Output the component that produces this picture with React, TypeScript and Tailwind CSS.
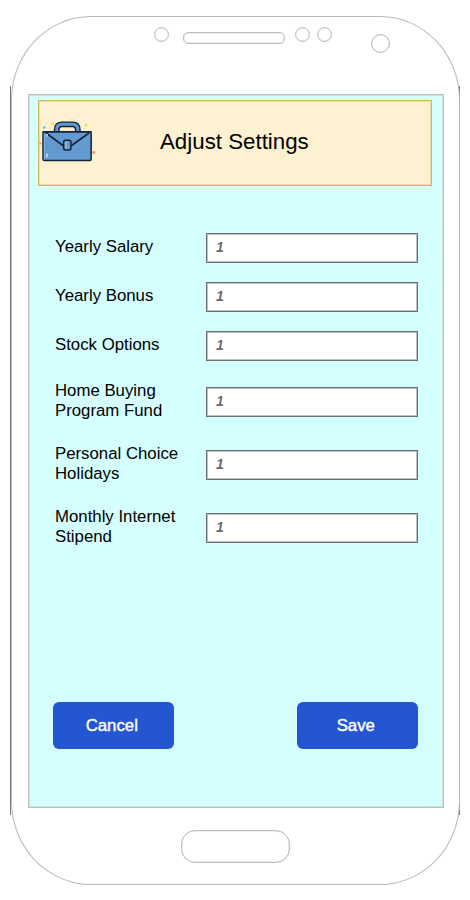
import React from "react";

const fields = [
  { lines: ["Yearly Salary"], row: "h-[49px]" },
  { lines: ["Yearly Bonus"], row: "h-[49px]" },
  { lines: ["Stock Options"], row: "h-[49px]" },
  { lines: ["Home Buying", "Program Fund"], row: "h-[63px]" },
  { lines: ["Personal Choice", "Holidays"], row: "h-[63px]" },
  { lines: ["Monthly Internet", "Stipend"], row: "h-[63px]" },
];

function Briefcase() {
  return (
    <svg className="h-[46px] w-[60px] shrink-0 overflow-visible" viewBox="0 0 60 46" fill="none">
      <path d="M14.7 14V11.5Q14.7 6.3 20 6.3H30.5Q35.8 6.3 35.8 11.5V14" stroke="#142438" strokeWidth="5.8" />
      <path d="M14.7 14V11.5Q14.7 6.3 20 6.3H30.5Q35.8 6.3 35.8 11.5V14" stroke="#629ad0" strokeWidth="3" />
      <rect x="1" y="13.8" width="48.2" height="28.6" rx="1.5" fill="#629ad0" stroke="#142438" strokeWidth="1.5" />
      <path d="M2.4 15.5V41.5" stroke="#8cb8df" strokeWidth="1" />
      <path d="M0.5 13.8H49.5M4 15L21 27.5M47 15L29.5 27.5" stroke="#142438" strokeWidth="1.6" />
      <rect x="21.6" y="22.2" width="7.4" height="9.8" rx="2" fill="#629ad0" stroke="#142438" strokeWidth="1.5" />
      <path d="M24.1 23.5V30.7" stroke="#9dbdd8" strokeWidth="1.5" />
      <path d="M5 16V18.5M5 35.5V39.5" stroke="#c5dcf0" strokeWidth="1.6" />
      <circle cx="10.3" cy="5.7" r="1.5" fill="#f7dc70" />
      <circle cx="44" cy="7.2" r="1.4" fill="#f8da58" />
      <circle cx="2.3" cy="9.5" r="1.3" fill="#77aadb" />
      <circle cx="51.8" cy="34.5" r="1.4" fill="#f39162" />
      <circle cx="-1.6" cy="25.5" r="1.1" fill="#f39162" />
      <path d="M29 1.7H31M42 10.5H43M3.5 5.5H4.5M50.7 25.5H51.7" stroke="#dacbaa" />
    </svg>
  );
}

export default function App() {
  return (
    <div className="relative h-[900px] w-[470px] overflow-hidden bg-white pt-4 pl-[11px] font-['Liberation_Sans',Arial,sans-serif] text-black">
      <div className="absolute top-[86px] left-[10px] h-[729px] w-[450px] border-x border-[#777]" />
      <main className="relative flex h-[869px] w-[449px] flex-col rounded-[80px/84px] border border-[#b8b8b8] bg-white">
        <div className="flex h-[77px] pt-[10px] pl-[142px]">
          <i className="h-[15px] w-[15px] rounded-full border border-[#bdbdbd] shadow-[inset_0_0_0_0.5px_#dddddd]" />
          <i className="mt-[5px] ml-[14px] h-[12px] w-[102px] rounded-[5px] border border-[#bdbdbd] shadow-[inset_0_0_0_0.5px_#dddddd]" />
          <i className="ml-[10px] h-[15px] w-[15px] rounded-full border border-[#bdbdbd] shadow-[inset_0_0_0_0.5px_#dddddd]" />
          <i className="ml-[7px] h-[15px] w-[15px] rounded-full border border-[#bdbdbd] shadow-[inset_0_0_0_0.5px_#dddddd]" />
          <i className="mt-[7px] ml-[39px] h-[19px] w-[19px] rounded-full border border-[#bdbdbd] shadow-[inset_0_0_0_0.5px_#dddddd]" />
        </div>

        <section className="ml-4 flex h-[714px] w-[416px] shrink-0 flex-col border border-[#c0c0c0] bg-[#d5fefe] shadow-[inset_0_0_0_1px_#cbe2e2]">
          <header className="mt-[5px] ml-[9px] flex h-[86px] w-[394px] shrink-0 border border-[#d4b75f] bg-[#fcf1d0] pt-[17px] pl-[3px] shadow-[inset_0_0_0_1px_#ecdbaa]">
            <Briefcase />
            <h1 className="mt-[10px] ml-[58px] text-[22.3px] leading-[27px] whitespace-nowrap">Adjust Settings</h1>
          </header>

          <form className="mt-[37px] ml-[26px] flex flex-col">
            {fields.map(({ lines, row }) => (
              <label key={lines[0]} className={`flex items-center ${row}`}>
                <span className="w-[151px] shrink-0 pb-px text-[16.8px] leading-5 whitespace-nowrap">
                  {lines.map((line) => (
                    <span key={line} className="block">{line}</span>
                  ))}
                </span>
                <input
                  defaultValue="1"
                  className="h-[30px] w-[212px] rounded-none border border-[#6c6e6e] bg-white pb-px pl-[9px] text-[14px] font-bold text-[#6c6c6c] italic shadow-[inset_0_0_0_1px_#c0c0c0] outline-none"
                />
              </label>
            ))}
          </form>

          <div className="mt-[143px] ml-6 flex w-[364.5px] justify-between">
            <button className="h-[46.5px] w-[120.5px] rounded-[6px] bg-[#2356d0] pr-[3px] pb-px text-[16.8px] text-white [-webkit-text-stroke:0.4px_white]"><span className="relative top-px">Cancel</span></button>
            <button className="h-[46.5px] w-[120.5px] rounded-[6px] bg-[#2356d0] pr-[3px] pb-px text-[16.8px] text-white [-webkit-text-stroke:0.4px_white]"><span className="relative top-px">Save</span></button>
          </div>
        </section>

        <div className="mt-[22px] ml-[169px] h-[33px] w-[109px] rounded-[14px] border border-[#bdbdbd] shadow-[inset_0_0_0_0.5px_#dddddd]" />
      </main>
    </div>
  );
}
